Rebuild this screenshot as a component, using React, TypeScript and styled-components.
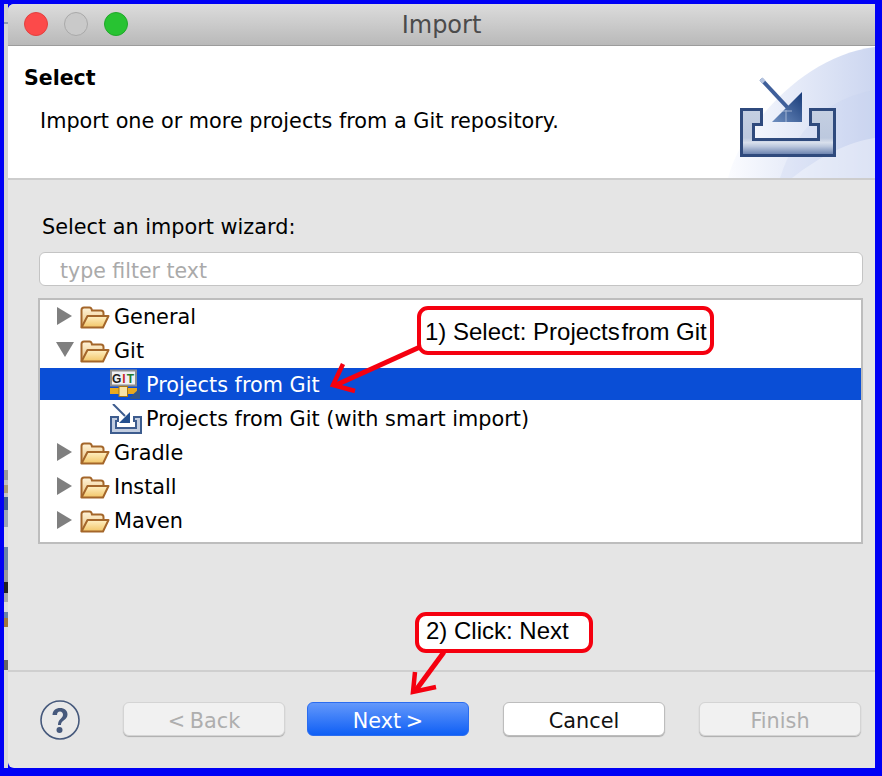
import styled, { createGlobalStyle } from 'styled-components';

const UI_FONT = '"DejaVu Sans", "Noto Sans", sans-serif';

const GlobalStyle = createGlobalStyle`
    html, body {
        margin: 0;
        padding: 0;
        background: #0000f5;
    }
`;

const Frame = styled.div`
    position: relative;
    width: 882px;
    height: 776px;
    box-sizing: border-box;
    display: flex;
    padding: 4px 7px 8px 4px;
    background: #0000f5;
    font-family: ${UI_FONT};
    overflow: hidden;
`;

const BackgroundStrip = styled.div`
    width: 4px;
    flex: none;
    display: flex;
    flex-direction: column;
    background: #d9d9d9;
    overflow: hidden;
`;

const StripPiece = styled.div<{ $height: number; $color: string }>`
    height: ${p => p.$height}px;
    flex: none;
    background: ${p => p.$color};
`;

const Window = styled.div`
    flex: 1;
    display: flex;
    flex-direction: column;
    background: #e5e5e5;
    border-radius: 6px 0 0 6px;
    overflow: hidden;
`;

const TitleBar = styled.div`
    position: relative;
    height: 41px;
    flex: none;
    display: flex;
    align-items: center;
    justify-content: center;
    background: linear-gradient(#dcdcdc, #b9b9b9);
    border-bottom: 1px solid #9c9c9c;
`;

const Lights = styled.div`
    position: absolute;
    left: 16px;
    top: 8px;
    display: flex;
    gap: 16px;
`;

const Light = styled.span<{ $fill: string; $edge: string }>`
    width: 24px;
    height: 24px;
    box-sizing: border-box;
    border-radius: 50%;
    background: ${p => p.$fill};
    border: 1px solid ${p => p.$edge};
`;

const WindowTitle = styled.div`
    font-size: 24px;
    color: #4b4b4b;
`;

const Banner = styled.div`
    position: relative;
    height: 134px;
    flex: none;
    box-sizing: border-box;
    padding: 16px 0 0 16px;
    background: #fff;
    border-bottom: 2px solid #cdcdcd;
`;

const BannerTitle = styled.div`
    font-size: 20.5px;
    font-weight: 700;
    line-height: 32px;
    color: #000;
`;

const BannerText = styled.div`
    font-size: 20.8px;
    line-height: 32px;
    margin: 11px 0 0 16px;
    color: #000;
`;

const BannerArt = styled.svg`
    position: absolute;
    right: 0;
    top: 0;
`;

const Body = styled.div`
    flex: 1;
    display: flex;
    flex-direction: column;
    padding: 32px 12px 0 30px;
`;

const SectionLabel = styled.div`
    font-size: 20.8px;
    line-height: 30px;
    margin-left: 4px;
    color: #000;
`;

const FilterField = styled.div`
    height: 34px;
    box-sizing: border-box;
    margin: 10px 0 12px 1px;
    padding: 3px 0 0 20px;
    display: flex;
    align-items: center;
    background: #fff;
    border: 1px solid #c4c4c4;
    border-radius: 6px;
    font-size: 20.5px;
    color: #aaa;
`;

const Tree = styled.div`
    height: 246px;
    box-sizing: border-box;
    display: flex;
    flex-direction: column;
    background: #fff;
    border: 2px solid #bdbdbd;
`;

const Row = styled.div<{ $selected?: boolean; $child?: boolean }>`
    height: ${p => (p.$selected ? 32 : 34)}px;
    margin-bottom: ${p => (p.$selected ? 2 : 0)}px;
    flex: none;
    display: flex;
    align-items: center;
    gap: 5px;
    padding-left: ${p => (p.$child ? 70 : 16)}px;
    background: ${p => (p.$selected ? '#0a4ed6' : 'transparent')};
    color: ${p => (p.$selected ? '#fff' : '#000')};
    font-size: 20.8px;
`;

const RowLabel = styled.span<{ $selected?: boolean }>`
    margin: ${p => (p.$selected ? 2 : 0)}px 0 0 -1px;
`;

const Twist = styled.svg`
    display: block;
    flex: none;
    margin: -2px -5px 0 0;
`;

const RowIcon = styled.svg`
    display: block;
    flex: none;
`;

const Footer = styled.div`
    height: 98px;
    flex: none;
    box-sizing: border-box;
    display: flex;
    align-items: flex-start;
    gap: 34px;
    padding: 30px 0 0 32px;
    border-top: 2px solid #cfcfcf;
`;

const HelpButton = styled.svg`
    margin: -2px 9px 0 0;
    flex: none;
`;

const NavGroup = styled.div`
    display: flex;
    gap: 22px;
`;

const Button = styled.button<{ $variant?: 'primary' | 'disabled' }>`
    width: 162px;
    height: 34px;
    box-sizing: border-box;
    padding: 4px 0 0;
    border-radius: 6px;
    font-family: inherit;
    font-size: 20.8px;
    word-spacing: -2px;
    border: 1px solid ${p => (p.$variant === 'primary' ? '#2a6cf0' : p.$variant === 'disabled' ? '#d4d4d4' : '#bdbdbd')};
    background: ${p =>
        p.$variant === 'primary'
            ? 'linear-gradient(#6398fb, #0f5ff5)'
            : p.$variant === 'disabled'
              ? '#f1f1f1'
              : '#fff'};
    color: ${p => (p.$variant === 'primary' ? '#fff' : p.$variant === 'disabled' ? '#aeaeae' : '#111')};
    box-shadow: 0 1px 1px ${p => (p.$variant === 'primary' ? 'transparent' : 'rgba(0, 0, 0, 0.25)')};
`;

const Callout = styled.div<{ $left: number; $top: number; $width: number; $height: number; $inset: string }>`
    position: absolute;
    left: ${p => p.$left}px;
    top: ${p => p.$top}px;
    width: ${p => p.$width}px;
    height: ${p => p.$height}px;
    box-sizing: border-box;
    display: flex;
    align-items: center;
    padding: ${p => p.$inset};
    background: #fff;
    border: 4px solid #f5000f;
    border-radius: 11px;
    font-family: "Liberation Sans", Arial, sans-serif;
    font-size: 24px;
    color: #000;
    white-space: pre;
`;

const TightSpace = styled.span`
    letter-spacing: -5px;
`;

const ArrowLayer = styled.svg`
    position: absolute;
    left: 0;
    top: 0;
    pointer-events: none;
`;

function TwistIcon({ open }: { open?: boolean }) {
    return (
        <Twist width="24" height="18" viewBox="0 0 24 18">
            {open ? <path d="M0 1H18L9 16Z" fill="#7f7f7f" /> : <path d="M1 0L16 9L1 18Z" fill="#7f7f7f" />}
        </Twist>
    );
}

function FolderIcon() {
    return (
        <RowIcon width="30" height="23" viewBox="0 0 30 23">
            <defs>
                <linearGradient id="folderBack" x1="0" y1="0" x2="0" y2="1">
                    <stop offset="0" stopColor="#fff3d8" />
                    <stop offset="1" stopColor="#eac07a" />
                </linearGradient>
                <linearGradient id="folderFront" x1="0" y1="0" x2="0" y2="1">
                    <stop offset="0" stopColor="#fff0c4" />
                    <stop offset="1" stopColor="#f2c566" />
                </linearGradient>
            </defs>
            <path
                d="M1.5 21.5V4Q1.5 1.5 4 1.5H9.5Q11.5 1.5 12 4.5H21Q23.5 4.5 23.5 7V9"
                fill="url(#folderBack)"
                stroke="#a4662a"
                strokeWidth="2"
            />
            <path
                d="M1.5 21.5L7.5 10H28.5L23 21.5Z"
                fill="url(#folderFront)"
                stroke="#a4662a"
                strokeWidth="2"
                strokeLinejoin="round"
            />
        </RowIcon>
    );
}

function GitProjectIcon() {
    return (
        <RowIcon width="32" height="30" viewBox="0 0 32 30">
            <rect x="1" y="1.5" width="25" height="15" fill="#f0f1f4" stroke="#8f8f8f" strokeWidth="2" />
            <text
                x="13.5"
                y="13.5"
                textAnchor="middle"
                fontFamily="Liberation Sans"
                fontWeight="700"
                fontSize="12"
                letterSpacing="1"
            >
                <tspan fill="#222">G</tspan>
                <tspan fill="#c62828">I</tspan>
                <tspan fill="#1f7a2e">T</tspan>
            </text>
            <rect x="0" y="19" width="27" height="6" fill="#e8a920" />
            <rect x="9" y="17.5" width="8.5" height="10" fill="#f7e3a8" stroke="#a8760f" />
            <path d="M17 31L30 19V31Z" fill="#2f5590" />
        </RowIcon>
    );
}

function SmartImportIcon() {
    return (
        <RowIcon width="32" height="30" viewBox="0 0 32 30">
            <path d="M1 13H8V17H6V24H26V17H24V13H31V29H1Z" fill="#c2cde0" stroke="#3d5c8e" strokeWidth="2" />
            <path d="M3 0L15 12" stroke="#3d5c8e" strokeWidth="2" />
            <path d="M20 8V19H9Z" fill="#24508f" />
        </RowIcon>
    );
}

function BannerGraphic() {
    return (
        <BannerArt width="195" height="132" viewBox="0 0 195 132">
            <defs>
                <linearGradient id="swoosh" x1="0" y1="0" x2="1" y2="0">
                    <stop offset="0" stopColor="#fbfcff" />
                    <stop offset="1" stopColor="#ccd6f0" />
                </linearGradient>
                <linearGradient id="tray" x1="0" y1="0" x2="0" y2="1">
                    <stop offset="0" stopColor="#c4cfe2" />
                    <stop offset="0.62" stopColor="#bcc8de" />
                    <stop offset="0.72" stopColor="#d8dfec" />
                    <stop offset="0.8" stopColor="#bcc8de" />
                    <stop offset="1" stopColor="#5f78a8" />
                </linearGradient>
                <linearGradient id="head" x1="0" y1="1" x2="1" y2="0">
                    <stop offset="0" stopColor="#6f8fc0" />
                    <stop offset="1" stopColor="#173a78" />
                </linearGradient>
            </defs>
            <path d="M48 132C60 85 120 10 195 1V132Z" fill="url(#swoosh)" />
            <path d="M100 132C120 70 160 50 195 44V132Z" fill="#c4cfee" opacity="0.25" />
            <path d="M112 132C140 110 170 95 195 92V132Z" fill="#ffffff" opacity="0.35" />
            <path
                d="M61.5 63.5H81.5V78.5H73.5V93.5H138.5V78.5H130.5V63.5H154.5V109.5H61.5Z"
                fill="url(#tray)"
                stroke="#2f4a7d"
                strokeWidth="3"
            />
            <path d="M81 33L108 62" stroke="#3f5f9a" strokeWidth="4" />
            <path d="M81 33L84 36" stroke="#b5c4e0" strokeWidth="4" />
            <path d="M122 46V76H92Z" fill="url(#head)" />
            <path d="M106 64V76M100 65H112" stroke="#c7d3e8" strokeWidth="1" opacity="0.7" />
        </BannerArt>
    );
}

const stripPieces = [
    { height: 18, color: '#cfcfcf' },
    { height: 2, color: '#8f9bb0' },
    { height: 446, color: '#d4d4d4' },
    { height: 10, color: '#999999' },
    { height: 5, color: '#c0c0c0' },
    { height: 8, color: '#a89a78' },
    { height: 4, color: '#c5c5c5' },
    { height: 13, color: '#3f5c90' },
    { height: 17, color: '#9ea6b5' },
    { height: 20, color: '#dddddd' },
    { height: 23, color: '#6a84a8' },
    { height: 12, color: '#9a9a9a' },
    { height: 11, color: '#222222' },
    { height: 9, color: '#aaaaaa' },
    { height: 10, color: '#dddddd' },
    { height: 6, color: '#6a84a8' },
    { height: 9, color: '#a07840' },
    { height: 33, color: '#dddddd' },
    { height: 10, color: '#666666' },
    { height: 98, color: '#d8d8d8' },
];

export default function App() {
    return (
        <>
            <GlobalStyle />
            <Frame>
                <BackgroundStrip>
                    {stripPieces.map((piece, i) => (
                        <StripPiece key={i} $height={piece.height} $color={piece.color} />
                    ))}
                </BackgroundStrip>
                <Window>
                    <TitleBar>
                        <Lights>
                            <Light $fill="#fc4a4a" $edge="#e2403f" />
                            <Light $fill="#c9c9c9" $edge="#a9a9a9" />
                            <Light $fill="#28c332" $edge="#20a82a" />
                        </Lights>
                        <WindowTitle>Import</WindowTitle>
                    </TitleBar>
                    <Banner>
                        <BannerTitle>Select</BannerTitle>
                        <BannerText>Import one or more projects from a Git repository.</BannerText>
                        <BannerGraphic />
                    </Banner>
                    <Body>
                        <SectionLabel>Select an import wizard:</SectionLabel>
                        <FilterField>type filter text</FilterField>
                        <Tree>
                            <Row>
                                <TwistIcon />
                                <FolderIcon />
                                <RowLabel>General</RowLabel>
                            </Row>
                            <Row>
                                <TwistIcon open />
                                <FolderIcon />
                                <RowLabel>Git</RowLabel>
                            </Row>
                            <Row $selected $child>
                                <GitProjectIcon />
                                <RowLabel $selected>Projects from Git</RowLabel>
                            </Row>
                            <Row $child>
                                <SmartImportIcon />
                                <RowLabel>Projects from Git (with smart import)</RowLabel>
                            </Row>
                            <Row>
                                <TwistIcon />
                                <FolderIcon />
                                <RowLabel>Gradle</RowLabel>
                            </Row>
                            <Row>
                                <TwistIcon />
                                <FolderIcon />
                                <RowLabel>Install</RowLabel>
                            </Row>
                            <Row>
                                <TwistIcon />
                                <FolderIcon />
                                <RowLabel>Maven</RowLabel>
                            </Row>
                        </Tree>
                    </Body>
                    <Footer>
                        <HelpButton width="40" height="40" viewBox="0 0 40 40">
                            <circle cx="20" cy="20" r="19" fill="#e9e9e9" stroke="#46597c" strokeWidth="1.6" />
                            <path
                                d="M12.5 15C12.5 10.5 16 8 20 8C24.5 8 27.5 10.5 27.5 14.5C27.5 20 21 20 21 25H18C18 19 23 18.5 23 14.8C23 12.8 21.8 11.5 20 11.5C18 11.5 17 13 17 15Z"
                                fill="#46597c"
                            />
                            <circle cx="19.5" cy="30" r="3" fill="#46597c" />
                        </HelpButton>
                        <NavGroup>
                            <Button $variant="disabled">&lt; Back</Button>
                            <Button $variant="primary">Next &gt;</Button>
                        </NavGroup>
                        <Button>Cancel</Button>
                        <Button $variant="disabled">Finish</Button>
                    </Footer>
                </Window>
                <Callout $left={417} $top={306} $width={297} $height={49} $inset="2px 0 0 4px">
                    1) Select: Projects<TightSpace> </TightSpace>from Git
                </Callout>
                <Callout $left={415} $top={612} $width={178} $height={41} $inset="0 0 3px 7px">
                    2) Click: Next
                </Callout>
                <ArrowLayer width="882" height="776" viewBox="0 0 882 776">
                    <path d="M420 347L336 385" stroke="#f5000f" strokeWidth="5" fill="none" />
                    <path d="M343 364L333 385L355 391" stroke="#f5000f" strokeWidth="4.5" fill="none" />
                    <path d="M444 652L416 690" stroke="#f5000f" strokeWidth="5" fill="none" />
                    <path d="M415 672L413 692L436 687" stroke="#f5000f" strokeWidth="4.5" fill="none" />
                </ArrowLayer>
            </Frame>
        </>
    );
}
